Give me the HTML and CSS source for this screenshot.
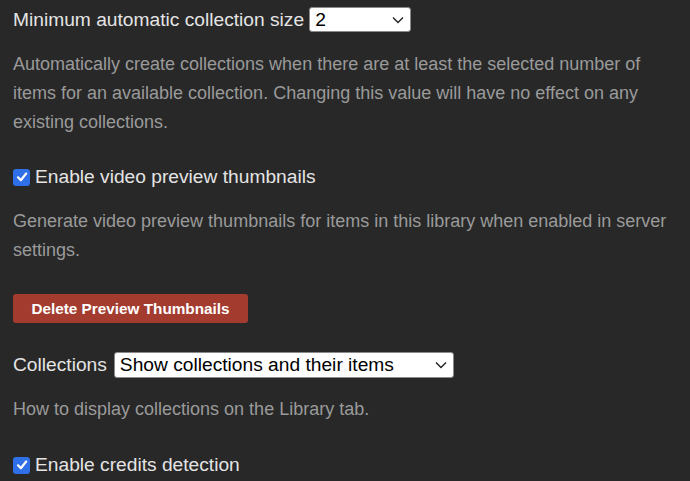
FILE: index.html
```html
<!DOCTYPE html>
<html>
<head>
<meta charset="utf-8">
<link rel="stylesheet" href="styles.css">
</head>
<body>
<div class="page">
  <div class="row row-first">
    <span class="label">Minimum automatic collection size</span>
    <span class="select select-small">
      <span class="select-text">2</span>
      <svg class="chev" width="12" height="8" viewBox="0 0 12 8"><path d="M1 1.5 L6 6.5 L11 1.5" fill="none" stroke="#222" stroke-width="1.4"/></svg>
    </span>
  </div>
  <p class="desc desc-1">Automatically create collections when there are at least the selected number of items for an available collection. Changing this value will have no effect on any existing collections.</p>

  <div class="row check-row check-1">
    <span class="checkbox"><svg width="12" height="12" viewBox="0 0 12 12"><path d="M2 6.3 L4.8 9.2 L10.2 2.5" fill="none" stroke="#fff" stroke-width="2.2" stroke-linecap="round" stroke-linejoin="round"/></svg></span>
    <span class="label">Enable video preview thumbnails</span>
  </div>
  <p class="desc desc-2">Generate video preview thumbnails for items in this library when enabled in server settings.</p>

  <button class="btn-danger">Delete Preview Thumbnails</button>

  <div class="row row-collections">
    <span class="label">Collections</span>
    <span class="select select-wide">
      <span class="select-text">Show collections and their items</span>
      <svg class="chev" width="12" height="8" viewBox="0 0 12 8"><path d="M1 1.5 L6 6.5 L11 1.5" fill="none" stroke="#222" stroke-width="1.4"/></svg>
    </span>
  </div>
  <p class="desc desc-3">How to display collections on the Library tab.</p>

  <div class="row check-row check-2">
    <span class="checkbox"><svg width="12" height="12" viewBox="0 0 12 12"><path d="M2 6.3 L4.8 9.2 L10.2 2.5" fill="none" stroke="#fff" stroke-width="2.2" stroke-linecap="round" stroke-linejoin="round"/></svg></span>
    <span class="label">Enable credits detection</span>
  </div>
</div>
</body>
</html>
```

FILE: styles.css
```css
html, body {
  margin: 0;
  padding: 0;
  background: #282828;
  height: 100%;
  overflow: hidden;
}
body {
  font-family: "Liberation Sans", Arial, sans-serif;
  color: #dddddd;
}
.page {
  padding: 7px 13px 0 13px;
  width: 664px;
}
.row {
  display: flex;
  align-items: center;
  height: 25px;
}
.label {
  font-size: 19.2px;
  color: #e4e4e4;
  white-space: nowrap;
}
.select {
  display: flex;
  align-items: center;
  justify-content: space-between;
  box-sizing: border-box;
  height: 25px;
  margin-left: 5px;
  background: #ffffff;
  border: 1px solid #8a8a8a;
  border-radius: 3px;
  padding: 0 6px 0 5px;
  color: #000;
  font-size: 19.2px;
}
.select-small { width: 102px; }
.select-wide { width: 340px; margin-left: 7px; }
.chev { flex: none; }
.desc {
  margin: 0;
  font-size: 18px;
  line-height: 29px;
  color: #9a9a9a;
}
.desc-1 { margin-top: 18px; }
.check-row { height: 24px; }
.check-1 { margin-top: 28px; }
.desc-2 { margin-top: 18px; }
.checkbox {
  flex: none;
  display: flex;
  align-items: center;
  justify-content: center;
  width: 17px;
  height: 17px;
  border-radius: 3px;
  background: #2f6fe8;
  margin-right: 5px;
}
.btn-danger {
  display: block;
  margin-top: 29px;
  width: 235px;
  height: 29px;
  border: none;
  border-radius: 3px;
  background: #a33b2f;
  color: #ffffff;
  font-family: "Liberation Sans", Arial, sans-serif;
  font-weight: bold;
  font-size: 15.3px;
  padding: 0;
}
.row-collections { margin-top: 29px; height: 26px; }
.row-collections .select { height: 26px; }
.desc-3 { margin-top: 17px; }
.check-2 { margin-top: 29px; }
```
